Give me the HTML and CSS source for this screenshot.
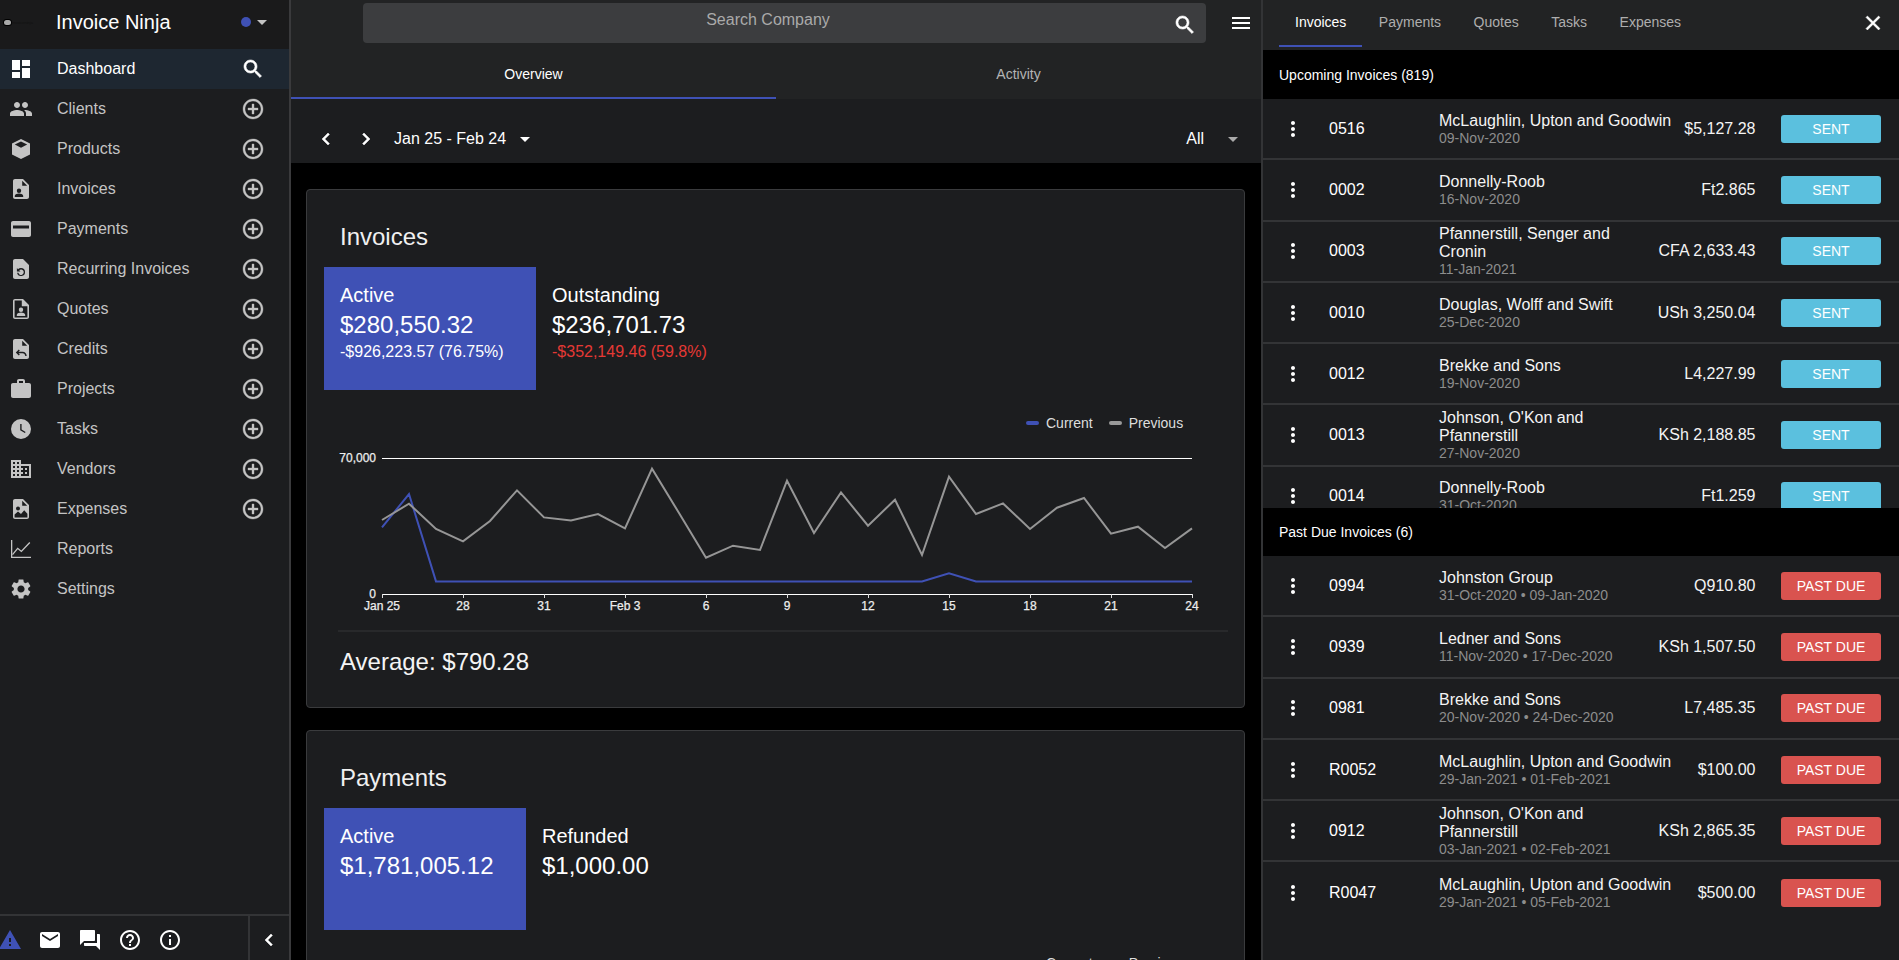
FILE: index.html
```html
<!DOCTYPE html>
<html lang="en">
<head>
<meta charset="utf-8">
<title>Invoice Ninja</title>
<link rel="stylesheet" href="styles.css">
</head>
<body>
<svg class="defs" width="0" height="0" aria-hidden="true">
  <symbol id="i-dashboard" viewBox="0 0 24 24"><path d="M3 13h8V3H3v10zm0 8h8v-6H3v6zm10 0h8V11h-8v10zm0-18v6h8V3h-8z"/></symbol>
  <symbol id="i-people" viewBox="0 0 24 24"><path d="M16 11c1.66 0 2.99-1.34 2.99-3S17.66 5 16 5c-1.66 0-3 1.34-3 3s1.34 3 3 3zm-8 0c1.66 0 2.99-1.34 2.99-3S9.66 5 8 5C6.34 5 5 6.34 5 8s1.34 3 3 3zm0 2c-2.33 0-7 1.17-7 3.5V19h14v-2.5c0-2.33-4.67-3.5-7-3.5zm8 0c-.29 0-.62.02-.97.05 1.16.84 1.97 1.97 1.97 3.45V19h6v-2.5c0-2.33-4.67-3.5-7-3.5z"/></symbol>
  <symbol id="i-cube" viewBox="0 0 24 24"><path d="M12 2l9 4.500v11L12 22l-9-4.500v-11L12 2z"/><path d="M12 4.400l6.200 3.100-6.200 3.200-6.200-3.200z" class="cut"/></symbol>
  <symbol id="i-invoice" viewBox="0 0 24 24"><path fill-rule="evenodd" d="M14 2H6c-1.100 0-2 .9-2 2v16c0 1.100.9 2 2 2h12c1.100 0 2-.9 2-2V8l-6-6zm-.8 1.800v5h5zM10 11.500a2.200 2.200 0 1 0 0 4.400 2.200 2.200 0 0 0 0-4.400zM5.800 20h8.400v-1.200c0-1.500-2.800-2.300-4.200-2.300s-4.200.8-4.200 2.300z"/></symbol>
  <symbol id="i-card" viewBox="0 0 24 24"><path fill-rule="evenodd" d="M4 4h16c1.100 0 2 .9 2 2v12c0 1.100-.9 2-2 2H4c-1.100 0-2-.9-2-2V6c0-1.100.9-2 2-2zm0 4.500v3h16v-3z"/></symbol>
  <symbol id="i-recurring" viewBox="0 0 24 24"><path fill-rule="evenodd" d="M14 2H6c-1.100 0-2 .9-2 2v16c0 1.100.9 2 2 2h12c1.100 0 2-.9 2-2V8l-6-6zM12 11a4 4 0 1 1-3.900 4.800h1.300a2.700 2.700 0 1 0 .8-2.500l1.300 1.300H7.900v-3.500l1.100 1.100A4 4 0 0 1 12 11z"/></symbol>
  <symbol id="i-quote" viewBox="0 0 24 24"><path fill-rule="evenodd" d="M14 2H6c-1.100 0-2 .9-2 2v16c0 1.100.9 2 2 2h12c1.100 0 2-.9 2-2V8l-6-6zM5.600 3.600h7.200v5.600h5.600v11.200H5.600zM12 10.500a2.200 2.200 0 1 0 0 4.400 2.200 2.200 0 0 0 0-4.400zM7.800 19h8.400v-1.200c0-1.500-2.800-2.300-4.200-2.300s-4.200.8-4.200 2.300z"/></symbol>
  <symbol id="i-credit" viewBox="0 0 24 24"><path fill-rule="evenodd" d="M14 2H6c-1.100 0-2 .9-2 2v16c0 1.100.9 2 2 2h12c1.100 0 2-.9 2-2V8l-6-6zm-.8 1.800v5h5zM9.800 12.500l1 1-1.300 1.300h4c2.600 0 4 1.800 4.200 4.200h-1.400c-.2-1.700-1.100-2.800-2.800-2.800h-4l1.300 1.300-1 1-3-3z"/></symbol>
  <symbol id="i-work" viewBox="0 0 24 24"><path d="M20 6h-4V4c0-1.110-.89-2-2-2h-4c-1.110 0-2 .89-2 2v2H4c-1.110 0-1.990.89-1.990 2L2 19c0 1.110.89 2 2 2h16c1.110 0 2-.89 2-2V8c0-1.110-.89-2-2-2zm-6 0h-4V4h4v2z"/></symbol>
  <symbol id="i-clock" viewBox="0 0 24 24"><path fill-rule="evenodd" d="M12 2a10 10 0 1 1 0 20 10 10 0 0 1 0-20zm-.8 5v6.200l4.700 2.800.7-1.100-4-2.400V7z"/></symbol>
  <symbol id="i-domain" viewBox="0 0 24 24"><path d="M12 7V3H2v18h20V7H12zM6 19H4v-2h2v2zm0-4H4v-2h2v2zm0-4H4V9h2v2zm0-4H4V5h2v2zm4 12H8v-2h2v2zm0-4H8v-2h2v2zm0-4H8V9h2v2zm0-4H8V5h2v2zm10 12h-8v-2h2v-2h-2v-2h2v-2h-2V9h8v10zm-2-8h-2v2h2v-2zm0 4h-2v2h2v-2z"/></symbol>
  <symbol id="i-expense" viewBox="0 0 24 24"><path fill-rule="evenodd" d="M14 2H6c-1.100 0-2 .9-2 2v16c0 1.100.9 2 2 2h12c1.100 0 2-.9 2-2V8l-6-6zm-.8 1.800v5h5zM9 9.500a2 2 0 1 0 0 4 2 2 0 0 0 0-4zM5.600 20.400v-2.800l3.400-3 3 2.300 3.200-3.600 3.200 3.500v3.600z"/></symbol>
  <symbol id="i-chart" viewBox="0 0 24 24"><path d="M2 3h1.300v16.700H22V21H2z"/><path d="M3 17.200l5.600-6.800 3.700 3 8-8.400 1 .9-8.900 9.300-3.600-3-4.800 5.800z"/></symbol>
  <symbol id="i-settings" viewBox="0 0 24 24"><path d="M19.140 12.940c.04-.3.060-.61.060-.94 0-.32-.02-.64-.07-.94l2.030-1.580c.18-.14.230-.41.120-.61l-1.920-3.320c-.12-.22-.37-.29-.59-.22l-2.390.96c-.5-.38-1.030-.7-1.620-.94l-.36-2.540c-.04-.24-.24-.41-.48-.41h-3.840c-.24 0-.43.17-.47.41l-.36 2.540c-.59.24-1.130.57-1.620.94l-2.390-.96c-.22-.08-.47 0-.59.22L2.740 8.870c-.12.21-.08.47.12.61l2.030 1.580c-.05.3-.09.63-.09.94s.02.64.07.94l-2.030 1.580c-.18.14-.23.41-.12.61l1.920 3.320c.12.22.37.29.59.22l2.390-.96c.5.38 1.030.7 1.620.94l.36 2.540c.05.24.24.41.48.41h3.840c.24 0 .44-.17.47-.41l.36-2.540c.59-.24 1.130-.56 1.620-.94l2.390.96c.22.08.47 0 .59-.22l1.920-3.320c.12-.22.07-.47-.12-.61l-2.010-1.580zM12 15.600c-1.980 0-3.600-1.620-3.600-3.600s1.620-3.600 3.600-3.600 3.600 1.620 3.600 3.600-1.620 3.600-3.600 3.600z"/></symbol>
  <symbol id="i-search" viewBox="0 0 24 24"><path d="M15.500 14h-.79l-.28-.27C15.410 12.590 16 11.110 16 9.500 16 5.910 13.090 3 9.500 3S3 5.910 3 9.500 5.910 16 9.500 16c1.610 0 3.090-.59 4.230-1.570l.27.28v.79l5 4.990L20.490 19l-4.990-5zm-6 0C7.010 14 5 11.990 5 9.500S7.010 5 9.500 5 14 7.010 14 9.500 11.990 14 9.500 14z" stroke="currentColor" stroke-width=".6"/></symbol>
  <symbol id="i-add" viewBox="0 0 24 24"><path d="M13 7h-2v4H7v2h4v4h2v-4h4v-2h-4V7zm-1-5C6.480 2 2 6.480 2 12s4.480 10 10 10 10-4.480 10-10S17.520 2 12 2zm0 18c-4.410 0-8-3.590-8-8s3.590-8 8-8 8 3.590 8 8-3.590 8-8 8z" stroke="currentColor" stroke-width=".35"/></symbol>
  <symbol id="i-warning" viewBox="0 0 24 24"><path d="M1 21h22L12 2 1 21zm12-3h-2v-2h2v2zm0-4h-2v-4h2v4z"/></symbol>
  <symbol id="i-email" viewBox="0 0 24 24"><path d="M20 4H4c-1.100 0-1.990.9-1.990 2L2 18c0 1.100.9 2 2 2h16c1.100 0 2-.9 2-2V6c0-1.100-.9-2-2-2zm0 4l-8 5-8-5V6l8 5 8-5v2z"/></symbol>
  <symbol id="i-forum" viewBox="0 0 24 24"><path d="M21 6h-2v9H6v2c0 .55.45 1 1 1h11l4 4V7c0-.55-.45-1-1-1zm-4 6V3c0-.55-.45-1-1-1H3c-.55 0-1 .45-1 1v14l4-4h10c.55 0 1-.45 1-1z"/></symbol>
  <symbol id="i-help" viewBox="0 0 24 24"><path d="M11 18h2v-2h-2v2zm1-16C6.480 2 2 6.480 2 12s4.480 10 10 10 10-4.480 10-10S17.520 2 12 2zm0 18c-4.410 0-8-3.590-8-8s3.590-8 8-8 8 3.590 8 8-3.590 8-8 8zm0-14c-2.210 0-4 1.790-4 4h2c0-1.100.9-2 2-2s2 .9 2 2c0 2-3 1.750-3 5h2c0-2.250 3-2.500 3-5 0-2.210-1.790-4-4-4z"/></symbol>
  <symbol id="i-info" viewBox="0 0 24 24"><path d="M11 17h2v-6h-2v6zm1-15C6.480 2 2 6.480 2 12s4.480 10 10 10 10-4.480 10-10S17.520 2 12 2zm0 18c-4.410 0-8-3.590-8-8s3.590-8 8-8 8 3.590 8 8-3.590 8-8 8zM11 9h2V7h-2v2z"/></symbol>
  <symbol id="i-left" viewBox="0 0 24 24"><path d="M15.410 7.410L14 6l-6 6 6 6 1.410-1.410L10.830 12z" stroke="currentColor" stroke-width=".5"/></symbol>
  <symbol id="i-right" viewBox="0 0 24 24"><path d="M8.590 16.590L10 18l6-6-6-6-1.410 1.410L13.170 12z" stroke="currentColor" stroke-width=".5"/></symbol>
  <symbol id="i-more" viewBox="0 0 24 24"><path d="M12 8c1.100 0 2-.9 2-2s-.9-2-2-2-2 .9-2 2 .9 2 2 2zm0 2c-1.100 0-2 .9-2 2s.9 2 2 2 2-.9 2-2-.9-2-2-2zm0 6c-1.100 0-2 .9-2 2s.9 2 2 2 2-.9 2-2-.9-2-2-2z"/></symbol>
  <symbol id="i-close" viewBox="0 0 24 24"><path d="M19 6.410L17.590 5 12 10.590 6.410 5 5 6.410 10.590 12 5 17.590 6.410 19 12 13.410 17.590 19 19 17.590 13.410 12z" stroke="currentColor" stroke-width=".5"/></symbol>
  <symbol id="i-menu" viewBox="0 0 24 24"><path d="M3 18h18v-2H3v2zm0-5h18v-2H3v2zm0-7v2h18V6H3z"/></symbol>
  <symbol id="i-drop" viewBox="0 0 24 24"><path d="M7 10l5 5 5-5z"/></symbol>
</svg>

<div class="app">
  <aside class="sidebar">
    <header class="brand">
      <div class="logo"><span class="logo-mark"></span><span class="logo-text">invoiceninja</span></div>
      <span class="brand-name">Invoice Ninja</span>
      <span class="brand-dot"></span>
      <svg class="ic brand-caret"><use href="#i-drop"/></svg>
    </header>
    <nav class="nav">
      <a class="nav-item active"><svg class="ic"><use href="#i-dashboard"/></svg><span class="nav-label">Dashboard</span><svg class="ic"><use href="#i-search"/></svg></a>
      <a class="nav-item"><svg class="ic"><use href="#i-people"/></svg><span class="nav-label">Clients</span><svg class="ic"><use href="#i-add"/></svg></a>
      <a class="nav-item"><svg class="ic"><use href="#i-cube"/></svg><span class="nav-label">Products</span><svg class="ic"><use href="#i-add"/></svg></a>
      <a class="nav-item"><svg class="ic"><use href="#i-invoice"/></svg><span class="nav-label">Invoices</span><svg class="ic"><use href="#i-add"/></svg></a>
      <a class="nav-item"><svg class="ic"><use href="#i-card"/></svg><span class="nav-label">Payments</span><svg class="ic"><use href="#i-add"/></svg></a>
      <a class="nav-item"><svg class="ic"><use href="#i-recurring"/></svg><span class="nav-label">Recurring Invoices</span><svg class="ic"><use href="#i-add"/></svg></a>
      <a class="nav-item"><svg class="ic"><use href="#i-quote"/></svg><span class="nav-label">Quotes</span><svg class="ic"><use href="#i-add"/></svg></a>
      <a class="nav-item"><svg class="ic"><use href="#i-credit"/></svg><span class="nav-label">Credits</span><svg class="ic"><use href="#i-add"/></svg></a>
      <a class="nav-item"><svg class="ic"><use href="#i-work"/></svg><span class="nav-label">Projects</span><svg class="ic"><use href="#i-add"/></svg></a>
      <a class="nav-item"><svg class="ic"><use href="#i-clock"/></svg><span class="nav-label">Tasks</span><svg class="ic"><use href="#i-add"/></svg></a>
      <a class="nav-item"><svg class="ic"><use href="#i-domain"/></svg><span class="nav-label">Vendors</span><svg class="ic"><use href="#i-add"/></svg></a>
      <a class="nav-item"><svg class="ic"><use href="#i-expense"/></svg><span class="nav-label">Expenses</span><svg class="ic"><use href="#i-add"/></svg></a>
      <a class="nav-item"><svg class="ic"><use href="#i-chart"/></svg><span class="nav-label">Reports</span></a>
      <a class="nav-item"><svg class="ic"><use href="#i-settings"/></svg><span class="nav-label">Settings</span></a>
    </nav>
    <footer class="side-foot">
      <div class="foot-icons">
        <svg class="ic warn"><use href="#i-warning"/></svg>
        <svg class="ic"><use href="#i-email"/></svg>
        <svg class="ic"><use href="#i-forum"/></svg>
        <svg class="ic"><use href="#i-help"/></svg>
        <svg class="ic"><use href="#i-info"/></svg>
      </div>
      <div class="foot-collapse"><svg class="ic"><use href="#i-left"/></svg></div>
    </footer>
  </aside>

  <main class="main">
    <div class="topbar">
      <div class="search">
        <span class="search-text">Search Company</span>
        <svg class="ic"><use href="#i-search"/></svg>
      </div>
      <svg class="ic hamburger"><use href="#i-menu"/></svg>
    </div>
    <div class="tabs">
      <div class="tab current">Overview</div>
      <div class="tab">Activity</div>
    </div>
    <div class="toolbar">
      <svg class="ic"><use href="#i-left"/></svg>
      <svg class="ic tool-next"><use href="#i-right"/></svg>
      <span class="range">Jan 25 - Feb 24</span>
      <svg class="ic range-caret"><use href="#i-drop"/></svg>
      <span class="spacer"></span>
      <span class="filter">All</span>
      <svg class="ic filter-caret"><use href="#i-drop"/></svg>
    </div>
    <div class="content">
      <section class="card">
        <h2 class="card-title">Invoices</h2>
        <div class="tiles">
          <div class="tile selected tile-w1">
            <div class="tile-label">Active</div>
            <div class="tile-amount">$280,550.32</div>
            <div class="tile-delta">-$926,223.57 (76.75%)</div>
          </div>
          <div class="tile">
            <div class="tile-label">Outstanding</div>
            <div class="tile-amount">$236,701.73</div>
            <div class="tile-delta negative">-$352,149.46 (59.8%)</div>
          </div>
        </div>
        <div class="legend">
          <span class="legend-dash blue"></span><span class="legend-text">Current</span>
          <span class="legend-dash grey"></span><span class="legend-text">Previous</span>
        </div>
        <svg class="chart" viewBox="0 0 880 168" width="880" height="168">
          <g class="axis">
            <line x1="44" y1="8.500" x2="854" y2="8.500"/>
            <line x1="44" y1="144.500" x2="854" y2="144.500"/>
            <path d="M44.500 144v4M125.500 144v4M206.500 144v4M287.500 144v4M368.500 144v4M449.500 144v4M530.500 144v4M611.500 144v4M692.500 144v4M773.500 144v4M854.500 144v4"/>
          </g>
          <g class="ylab">
            <text x="38" y="12">70,000</text>
            <text x="38" y="148">0</text>
          </g>
          <g class="xlab">
            <text x="44" y="160">Jan 25</text><text x="125" y="160">28</text><text x="206" y="160">31</text><text x="287" y="160">Feb 3</text><text x="368" y="160">6</text><text x="449" y="160">9</text><text x="530" y="160">12</text><text x="611" y="160">15</text><text x="692" y="160">18</text><text x="773" y="160">21</text><text x="854" y="160">24</text>
          </g>
          <polyline class="line-blue" points="44,77.400 71,44 98,131.400 125,131.400 152,131.400 179,131.400 206,131.400 233,131.400 260,131.400 287,131.400 314,131.400 341,131.400 368,131.400 395,131.400 422,131.400 449,131.400 476,131.400 503,131.400 530,131.400 557,131.400 584,131.400 611,123.400 638,131.400 665,131.400 692,131.400 719,131.400 746,131.400 773,131.400 800,131.400 827,131.400 854,131.400"/>
          <polyline class="line-grey" points="44,70 71,53.700 98,79 125,91.400 152,71 179,40.400 206,67.400 233,70.400 260,64 287,78.400 314,18.700 341,63 368,107.700 395,95.700 422,100 449,30.700 476,83 503,42.400 530,75.700 557,49.700 584,105 611,26.700 638,64 665,53.400 692,79 719,57.700 746,48 773,83.700 800,76.700 827,98 854,78.400"/>
        </svg>
        <div class="average">Average: $790.28</div>
      </section>

      <section class="card">
        <h2 class="card-title">Payments</h2>
        <div class="tiles">
          <div class="tile selected tile-w2">
            <div class="tile-label">Active</div>
            <div class="tile-amount">$1,781,005.12</div>
          </div>
          <div class="tile">
            <div class="tile-label">Refunded</div>
            <div class="tile-amount">$1,000.00</div>
          </div>
        </div>
        <div class="legend">
          <span class="legend-dash blue"></span><span class="legend-text">Current</span>
          <span class="legend-dash grey"></span><span class="legend-text">Previous</span>
        </div>
      </section>
    </div>
  </main>

  <aside class="panel">
    <div class="panel-tabs">
      <div class="ptab current">Invoices</div>
      <div class="ptab">Payments</div>
      <div class="ptab">Quotes</div>
      <div class="ptab">Tasks</div>
      <div class="ptab">Expenses</div>
      <svg class="ic panel-close"><use href="#i-close"/></svg>
    </div>
    <div class="panel-head">Upcoming Invoices (819)</div>
    <div class="rows rows-upcoming">
      <div class="row"><svg class="ic"><use href="#i-more"/></svg><span class="num">0516</span><div class="who"><div class="name">McLaughlin, Upton and Goodwin</div><div class="date">09-Nov-2020</div></div><span class="amt">$5,127.28</span><span class="badge sent">SENT</span></div>
      <div class="row"><svg class="ic"><use href="#i-more"/></svg><span class="num">0002</span><div class="who"><div class="name">Donnelly-Roob</div><div class="date">16-Nov-2020</div></div><span class="amt">Ft2.865</span><span class="badge sent">SENT</span></div>
      <div class="row"><svg class="ic"><use href="#i-more"/></svg><span class="num">0003</span><div class="who narrow"><div class="name">Pfannerstill, Senger and Cronin</div><div class="date">11-Jan-2021</div></div><span class="amt">CFA 2,633.43</span><span class="badge sent">SENT</span></div>
      <div class="row"><svg class="ic"><use href="#i-more"/></svg><span class="num">0010</span><div class="who"><div class="name">Douglas, Wolff and Swift</div><div class="date">25-Dec-2020</div></div><span class="amt">USh 3,250.04</span><span class="badge sent">SENT</span></div>
      <div class="row"><svg class="ic"><use href="#i-more"/></svg><span class="num">0012</span><div class="who"><div class="name">Brekke and Sons</div><div class="date">19-Nov-2020</div></div><span class="amt">L4,227.99</span><span class="badge sent">SENT</span></div>
      <div class="row"><svg class="ic"><use href="#i-more"/></svg><span class="num">0013</span><div class="who narrow"><div class="name">Johnson, O'Kon and Pfannerstill</div><div class="date">27-Nov-2020</div></div><span class="amt">KSh 2,188.85</span><span class="badge sent">SENT</span></div>
      <div class="row"><svg class="ic"><use href="#i-more"/></svg><span class="num">0014</span><div class="who"><div class="name">Donnelly-Roob</div><div class="date">31-Oct-2020</div></div><span class="amt">Ft1.259</span><span class="badge sent">SENT</span></div>
    </div>
    <div class="panel-head past">Past Due Invoices (6)</div>
    <div class="rows">
      <div class="row"><svg class="ic"><use href="#i-more"/></svg><span class="num">0994</span><div class="who"><div class="name">Johnston Group</div><div class="date">31-Oct-2020 • 09-Jan-2020</div></div><span class="amt">Q910.80</span><span class="badge due">PAST DUE</span></div>
      <div class="row"><svg class="ic"><use href="#i-more"/></svg><span class="num">0939</span><div class="who"><div class="name">Ledner and Sons</div><div class="date">11-Nov-2020 • 17-Dec-2020</div></div><span class="amt">KSh 1,507.50</span><span class="badge due">PAST DUE</span></div>
      <div class="row"><svg class="ic"><use href="#i-more"/></svg><span class="num">0981</span><div class="who"><div class="name">Brekke and Sons</div><div class="date">20-Nov-2020 • 24-Dec-2020</div></div><span class="amt">L7,485.35</span><span class="badge due">PAST DUE</span></div>
      <div class="row"><svg class="ic"><use href="#i-more"/></svg><span class="num">R0052</span><div class="who"><div class="name">McLaughlin, Upton and Goodwin</div><div class="date">29-Jan-2021 • 01-Feb-2021</div></div><span class="amt">$100.00</span><span class="badge due">PAST DUE</span></div>
      <div class="row"><svg class="ic"><use href="#i-more"/></svg><span class="num">0912</span><div class="who narrow"><div class="name">Johnson, O'Kon and Pfannerstill</div><div class="date">03-Jan-2021 • 02-Feb-2021</div></div><span class="amt">KSh 2,865.35</span><span class="badge due">PAST DUE</span></div>
      <div class="row last"><svg class="ic"><use href="#i-more"/></svg><span class="num">R0047</span><div class="who"><div class="name">McLaughlin, Upton and Goodwin</div><div class="date">29-Jan-2021 • 05-Feb-2021</div></div><span class="amt">$500.00</span><span class="badge due">PAST DUE</span></div>
    </div>
  </aside>
</div>
</body>
</html>
```
FILE: styles.css
```css
* { box-sizing: border-box; }
html, body { margin: 0; height: 100%; overflow: hidden; }
body { background: #000; color: #fff; font-family: "Liberation Sans", Arial, sans-serif; font-size: 16px; }
.defs { position: absolute; }
.ic { width: 24px; height: 24px; fill: currentColor; flex: none; display: block; }
.cut { fill: #1c1d1f; }

.app { display: flex; height: 960px; width: 1899px; }

/* Sidebar */
.sidebar { width: 291px; flex: none; display: flex; flex-direction: column; background: #1c1d1f; border-right: 2px solid #3a3a3c; color: #c4c4c4; }
.brand { height: 49px; display: flex; align-items: center; background: #1a1a1b; color: #fff; padding: 0 0 5px 4px; }
.logo { width: 52px; display: flex; align-items: center; gap: 1px; flex: none; }
.logo-mark { width: 7px; height: 5px; border-radius: 3px; background: #aaa; box-shadow: 0 0 0 1px #000; }
.logo-text { font-size: 4px; line-height: 5px; color: #111; }
.brand-name { font-size: 20px; flex: 1; }
.brand-dot { width: 10px; height: 10px; border-radius: 50%; background: #3f51b5; margin-right: -1px; }
.brand-caret { margin-right: 15px; color: #c4c4c4; }
.nav { flex: 1; }
.nav-item { height: 40px; display: flex; align-items: center; padding: 0 24px 0 9px; }
.nav-item.active { background: #1e2731; color: #fff; }
.nav-label { flex: 1; margin-left: 24px; }
.side-foot { height: 46px; display: flex; border-top: 2px solid #333436; color: #fff; }
.foot-icons { width: 248px; display: flex; gap: 16px; padding: 12px 0 0 0; }
.warn { color: #3f51b5; margin-left: -2px; }
.foot-collapse { flex: 1; border-left: 2px solid #333436; padding: 12px 0 0 7px; }

/* Main */
.main { width: 970px; flex: none; display: flex; flex-direction: column; overflow: hidden; }
.topbar { height: 50px; flex: none; display: flex; align-items: flex-start; background: #222324; padding: 3px 0 0 72px; }
.search { width: 843px; height: 40px; display: flex; align-items: center; background: #3c3d3f; border-radius: 4px; padding-right: 9px; color: #fff; }
.search-text { flex: 1; text-align: center; color: #aaa; margin-top: -6px; }
.search .ic { margin-top: 4px; }
.hamburger { margin: 8px 0 0 23px; }
.tabs { height: 49px; flex: none; display: flex; background: #222324; font-size: 14px; color: #b4b4b4; }
.tab { flex: 1; display: flex; align-items: center; justify-content: center; border-bottom: 2px solid transparent; }
.tab.current { color: #fff; border-bottom-color: #3f51b5; }
.toolbar { height: 64px; flex: none; display: flex; align-items: center; background: #1c1d1f; padding: 16px 16px 0 23px; }
.tool-next { margin-left: 16px; }
.range { margin-left: 16px; }
.range-caret { margin-left: 7px; }
.spacer { flex: 1; }
.filter { margin-right: 17px; }
.filter-caret { color: #aaa; }
.content { flex: 1; padding: 26px 16px 0 15px; overflow: hidden; display: flex; flex-direction: column; gap: 21.5px; }

.card { flex: none; background: #1c1d1f; border: 1px solid #3a3b3d; border-radius: 4px; padding: 0 0 0 17px; min-height: 519px; }
.card-title { margin: 0; padding: 32px 0 0 16px; height: 77px; font-size: 24px; font-weight: 400; line-height: 30px; color: #f0f0f0; }
.tiles { display: flex; height: 122.5px; }
.tile { padding: 17px 16px 0; }
.tile.selected { background: #3f51b5; }
.tile-w1 { width: 212px; }
.tile-w2 { width: 202px; }
.tile-label { font-size: 20px; line-height: 23px; }
.tile-amount { font-size: 24px; line-height: 28px; margin-top: 4px; }
.tile-delta { font-size: 16px; line-height: 18px; margin-top: 4px; }
.negative { color: #e53935; }

.legend { height: 36.5px; margin-top: 24px; display: flex; align-items: flex-start; padding-left: 702px; font-size: 14px; color: #ddd; line-height: 18px; }
.legend-dash { width: 13px; height: 4px; border-radius: 2px; margin: 7px 7px 0 0; }
.legend-dash.blue { background: #3f51b5; }
.legend-dash.grey { background: #999; }
.legend-text { margin-right: 16px; }

.chart { display: block; margin-left: 14px; width: 880px; height: 168px; overflow: visible; }
.axis line { stroke: #fff; stroke-width: 1; }
.axis path { stroke: #ddd; stroke-width: 1; fill: none; }
.ylab text, .xlab text { font-size: 12px; fill: #ededed; stroke: #ededed; stroke-width: .25px; }
.ylab text { text-anchor: end; }
.xlab text { text-anchor: middle; }
.line-blue, .line-grey { fill: none; stroke-width: 2; stroke-linejoin: miter; }
.line-blue { stroke: #3f51b5; }
.line-grey { stroke: #969696; }
.average { margin: 12px 16px 0 14px; border-top: 2px solid #28292b; padding: 16px 0 0 2px; font-size: 24px; line-height: 28px; color: #f4f4f4; }

/* Right panel */
.panel { flex: 1; min-width: 0; border-left: 2px solid #333436; background: #1c1d1f; display: flex; flex-direction: column; overflow: hidden; }
.panel-tabs { height: 50px; flex: none; display: flex; gap: .5px; background: #222324; font-size: 14px; color: #aeaeae; padding-left: 16px; }
.ptab { height: 47px; padding: 14px 16px 0; }
.ptab.current { color: #fff; border-bottom: 2px solid #3f51b5; }
.panel-close { color: #fff; margin: 11px 14px 0 auto; }
.panel-head { height: 49px; flex: none; background: #000; font-size: 14px; padding: 17px 0 0 16px; line-height: 16px; }
.panel-head.past { height: 48px; padding-top: 16px; }
.rows-upcoming { height: 409px; flex: none; overflow: hidden; }
.row { height: 61.3px; display: flex; align-items: center; border-bottom: 2px solid #333436; padding: 0 18px; }
.row.last { border-bottom: 0; }
.num { width: 110px; margin-left: 24px; flex: none; }
.who { flex: 1; min-width: 0; }
.narrow .name { max-width: 195px; }
.name { line-height: 18px; color: #f4f4f4; }
.date { font-size: 14px; line-height: 16px; color: #8d8d8d; }
.amt { flex: none; text-align: right; white-space: nowrap; margin: 0 25.5px 0 8px; color: #f4f4f4; }
.badge { width: 100px; height: 28px; flex: none; border-radius: 3px; font-size: 14px; display: flex; align-items: center; justify-content: center; color: #fff; }
.sent { background: #5bc0de; }
.due { background: #d9534f; }
```
